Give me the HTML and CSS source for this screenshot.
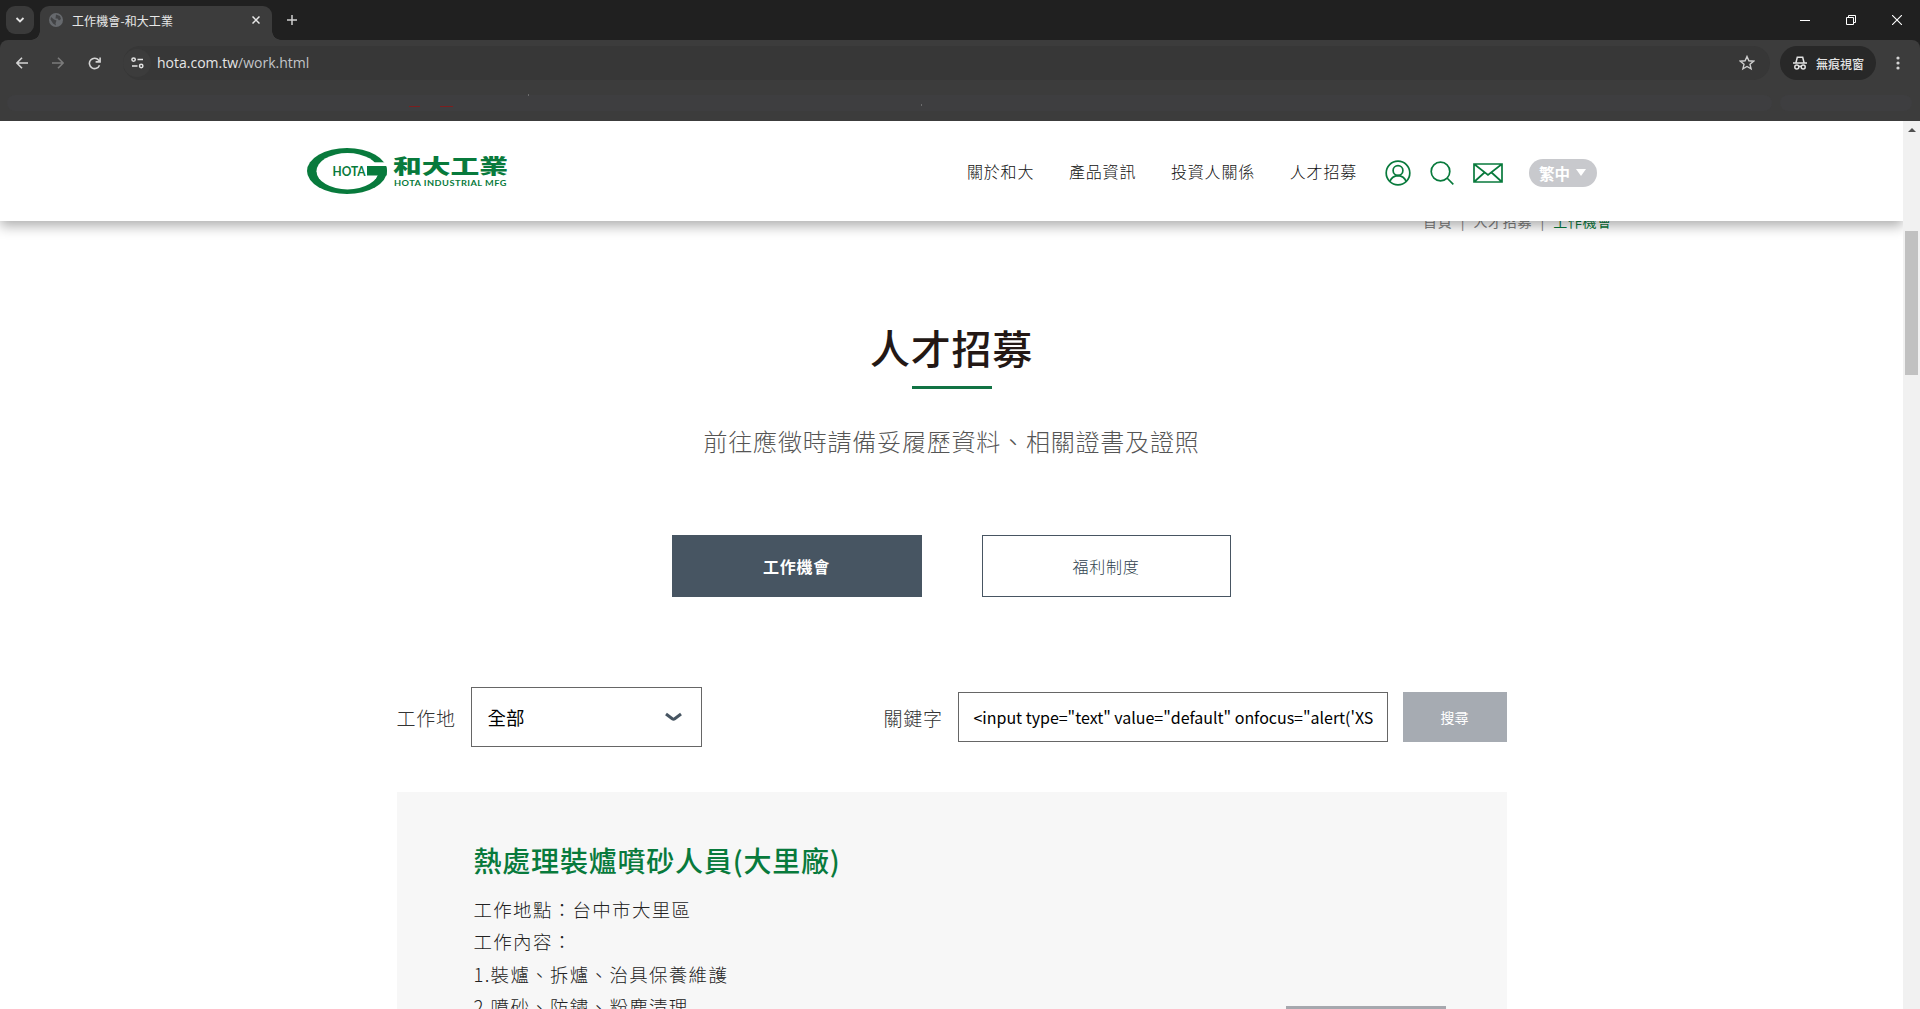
FILE: index.html
```html
<!DOCTYPE html>
<html lang="zh-Hant">
<head>
  <meta charset="UTF-8" />
  <meta name="viewport" content="width=device-width, initial-scale=1.0"/>
  <title>工作機會-和大工業</title>
  <link rel="stylesheet" href="styles.css">
</head>
<body>
  <div class="tab-strip">
    <div class="tab-search">
      <svg width="10" height="8" viewBox="0 0 10 8"><path d="M1.5 2l3.5 3.5L8.500 2" fill="none" stroke="#e3e3e3" stroke-width="1.8"/></svg>
    </div>
    <div class="tab">
      <svg width="14" height="14" viewBox="0 0 14 14"><circle cx="7" cy="7" r="7" fill="#66696d"/><path d="M2 4l3 2.500 2.500 1-1 3 .5 2-3-2-2.500-4zM7 1.500l4 1.500 1 3-2 1.500-1.500-2-2 0z" fill="#424345"/></svg>
      <span>工作機會-和大工業</span>
      <svg class="tab-close" width="8" height="8" viewBox="0 0 8 8"><path d="M.5.5l7 7M7.500.5l-7 7" stroke="#e8e8e8" stroke-width="1.5"/></svg>
    </div>
    <svg class="new-tab" width="10" height="10" viewBox="0 0 10 10"><path d="M5 0v10M0 5h10" stroke="#d0d0d0" stroke-width="1.5"/></svg>
    <div class="window-buttons">
      <svg width="10" height="10" viewBox="0 0 10 10"><path d="M0 5.500h10" stroke="#fff"/></svg>
      <svg width="10" height="10" viewBox="0 0 10 10"><path d="M.5 2.500h7v7h-7zM2.500 2.500v-2h7v7h-2" fill="none" stroke="#fff"/></svg>
      <svg width="10" height="10" viewBox="0 0 10 10"><path d="M0 0l10 10M10 0L0 10" stroke="#fff" stroke-width="1.1"/></svg>
    </div>
  </div>

  <div class="toolbar">
    <svg width="12" height="12" viewBox="0 0 12 12"><path d="M12 6H1M6 .8L.9 6 6 11.200" fill="none" stroke="#d4d4d4" stroke-width="1.6"/></svg>
    <svg width="12" height="12" viewBox="0 0 12 12"><path d="M0 6h11M6 .8L11.100 6 6 11.200" fill="none" stroke="#7b7b7b" stroke-width="1.6"/></svg>
    <svg width="13" height="13" viewBox="0 0 13 13"><path d="M11.500 8.200A5.200 5.200 0 1 1 10.700 3.200L12 4.600M12.100.4v4.500H7.600" fill="none" stroke="#d4d4d4" stroke-width="1.6"/></svg>
    <div class="address">
      <div class="site-info">
        <svg width="13" height="12" viewBox="0 0 13 12"><g fill="none" stroke="#e3e3e3" stroke-width="1.5"><circle cx="2.600" cy="2.600" r="1.700"/><path d="M6.500 2.600H12M1 9h5.500"/><circle cx="10.200" cy="9" r="1.700"/></g></svg>
      </div>
      <span class="url">hota.com.tw<span>/work.html</span></span>
      <svg class="star" width="16" height="16" viewBox="0 0 16 16"><path d="M8 1.500l1.900 4.300 4.700.4-3.600 3.100 1.100 4.600L8 11.500l-4.100 2.400L5 9.300 1.400 6.200l4.700-.4z" fill="none" stroke="#cfcfcf" stroke-width="1.400"/></svg>
    </div>
    <div class="incognito">
      <svg width="14" height="14" viewBox="0 0 14 14"><g fill="none" stroke="#e3e3e3" stroke-width="1.500"><path d="M0 7h14M3 6.500L4.300 1.200h5.400L11 6.500"/><circle cx="3.800" cy="11" r="2"/><circle cx="10.200" cy="11" r="2"/><path d="M5.800 10.500q1.200-.6 2.400 0"/></g></svg>
      <span>無痕視窗</span>
    </div>
    <svg class="menu" width="4" height="14" viewBox="0 0 4 14"><g fill="#d4d4d4"><circle cx="2" cy="2" r="1.600"/><circle cx="2" cy="7" r="1.600"/><circle cx="2" cy="12" r="1.600"/></g></svg>
  </div>
  <div class="bookmarks">
    <svg width="1920" height="38" viewBox="0 0 1920 38"><rect x="7" y="12" width="1765" height="16" rx="8" fill="#3e3e40"/><rect x="1780" y="12" width="132" height="16" rx="8" fill="#3e3e40"/><path d="M409 23.500h11M440 23.500h13" stroke="#7c1f1f"/><path d="M528 12h1M921 22h1" stroke="#999"/></svg>
  </div>

  <div class="viewport">
    <div class="page">
      <header>
        <svg class="logo" width="201" height="46" viewBox="0 0 201 46">
          <ellipse cx="40" cy="23" rx="40" ry="23" fill="#087a3c"/>
          <ellipse cx="40.500" cy="23.200" rx="31" ry="18.200" fill="#fff"/>
          <path d="M60 14.300h20.500V18H60z" fill="#fff"/>
          <path d="M60 18h19.100Q80.500 22 79.600 27.500H60z" fill="#087a3c"/>
          <text class="logo-mark" x="25.500" y="28" textLength="33" lengthAdjust="spacingAndGlyphs">HOTA</text>
          <text class="logo-name" x="86" y="25.700" textLength="115" lengthAdjust="spacingAndGlyphs">和大工業</text>
          <text class="logo-sub" x="87" y="37.700" textLength="113" lengthAdjust="spacingAndGlyphs">HOTA INDUSTRIAL MFG</text>
        </svg>
        <nav>
          <a>關於和大</a>
          <a>產品資訊</a>
          <a>投資人關係</a>
          <a>人才招募</a>
        </nav>
        <div class="tools">
          <svg width="26" height="26" viewBox="0 0 26 26"><g fill="none" stroke="#087a3c" stroke-width="1.700"><circle cx="13" cy="13" r="11.800"/><circle cx="13" cy="10.500" r="4.900"/><path d="M4.800 21.500Q7 16 13 15.600 19 16 21.200 21.500"/></g></svg>
          <svg width="24" height="24" viewBox="0 0 24 24"><g fill="none" stroke="#087a3c" stroke-width="1.700"><circle cx="10.500" cy="10.500" r="9.300"/><path d="M17 17l6.300 6.300"/></g></svg>
          <svg width="30" height="20" viewBox="0 0 30 20"><path d="M1 1h28v18H1zM1 1l14 11L29 1M1 19l10.500-9.500M29 19L18.500 9.500" fill="none" stroke="#087a3c" stroke-width="1.700"/></svg>
        </div>
        <div class="lang">繁中<i></i></div>
      </header>

      <main>
        <div class="breadcrumb"><a>首頁</a><i>|</i><a>人才招募</a><i>|</i><b>工作機會</b></div>
        <h1>人才招募</h1>
        <p class="lead">前往應徵時請備妥履歷資料、相關證書及證照</p>

        <div class="tabs">
          <a class="active">工作機會</a>
          <a>福利制度</a>
        </div>

        <div class="filter">
          <label>工作地</label>
          <div class="select">
            <span>全部</span>
            <svg width="17" height="10" viewBox="0 0 17 10"><path d="M1 2L7.300 6.800q1.200.9 2.400 0L16 2" fill="none" stroke="#475562" stroke-width="3"/></svg>
          </div>
          <label class="keyword">關鍵字</label>
          <div class="input">&lt;input type="text" value="default" onfocus="alert('XS</div>
          <div class="search">搜尋</div>
        </div>

        <div class="job">
          <div class="job-text">
            <h2>熱處理裝爐噴砂人員(大里廠)</h2>
            <p>工作地點：台中市大里區</p>
            <p>工作內容：</p>
            <p>1.裝爐、拆爐、治具保養維護</p>
            <p>2.噴砂、防鏽、粉塵清理</p>
          </div>
          <div class="job-button"></div>
        </div>
      </main>
    </div>
    <div class="scrollbar">
      <div class="arrow"></div>
      <div class="thumb"></div>
    </div>
  </div>
</body>
</html>
```
FILE: styles.css
```css
* {
  box-sizing: border-box;
}

body {
  margin: 0;
  height: 1009px;
  overflow: hidden;
  display: flex;
  flex-direction: column;
  font-family: "Noto Sans CJK TC", sans-serif;
  background: linear-gradient(#202020 60px, #fff 60px);
}

svg {
  display: block;
  flex: none;
}

h1, h2, p {
  margin: 0;
}

i, b {
  font-style: normal;
  font-weight: inherit;
}

/* ブラウザ上部 */
.tab-strip {
  height: 40px;
  flex: none;
  display: flex;
  align-items: center;
  padding: 0 18px 0 6px;
  background: #202020;
}

.tab-search {
  width: 28px;
  height: 28px;
  border-radius: 9px;
  background: #3a3a3a;
  display: flex;
  align-items: center;
  justify-content: center;
}

.tab {
  width: 232px;
  height: 34px;
  margin: 6px 0 0 6px;
  padding: 0 12px 6px 9px;
  border-radius: 9px 9px 0 0;
  background: #3c3c3c;
  display: flex;
  align-items: center;
  color: #e8e8e8;
  font-size: 12px;
  position: relative;
}

.tab::before,
.tab::after {
  content: "";
  position: absolute;
  bottom: 0;
  left: -9px;
  width: 9px;
  height: 9px;
  background: radial-gradient(circle at 0 0, #202020 8.500px, #3c3c3c 9px);
}

.tab::after {
  left: auto;
  right: -9px;
  background: radial-gradient(circle at 100% 0, #202020 8.500px, #3c3c3c 9px);
}

.tab span {
  margin-left: 9px;
  letter-spacing: 0.1px;
}

.tab-close {
  margin-left: auto;
}

.new-tab {
  margin-left: 15px;
}

.window-buttons {
  margin-left: auto;
  display: flex;
  gap: 36px;
}

.toolbar {
  height: 43px;
  flex: none;
  display: flex;
  align-items: center;
  padding: 3px 20px 0 16px;
  gap: 24px;
  background: #3c3c3c;
  border-radius: 8px 8px 0 0;
}

.address {
  flex: 1;
  height: 34px;
  margin-left: -2px;
  padding: 0 15px 0 0;
  border-radius: 17px;
  background: #373737;
  display: flex;
  align-items: center;
}

.site-info {
  width: 28px;
  height: 28px;
  border-radius: 14px;
  background: #3c3c3c;
  display: flex;
  align-items: center;
  justify-content: center;
}

.url {
  margin-left: 6px;
  padding-bottom: 1px;
  font-family: "Open Sans", sans-serif;
  font-size: 14px;
  color: #e6e6e6;
}

.url span {
  color: #c3c5c9;
}

.star {
  margin-left: auto;
}

.incognito {
  width: 96px;
  height: 34px;
  margin-left: -14px;
  padding-left: 13px;
  border-radius: 17px;
  background: #282828;
  display: flex;
  align-items: center;
  gap: 9px;
  color: #e3e3e3;
  font-size: 12px;
  font-weight: 500;
}

.menu {
  margin-left: -4px;
}

.bookmarks {
  height: 38px;
  flex: none;
  background: #3c3c3c;
}

.viewport {
  flex: 1;
  min-height: 0;
  display: flex;
}

.page {
  flex: 1;
  height: 888px;
  overflow: hidden;
}

/* ヘッダー */
header {
  height: 100px;
  padding: 0 306px 0 307px;
  display: flex;
  align-items: center;
  background: #fff;
  box-shadow: 0 5px 12px rgba(0, 0, 0, 0.32);
  position: relative;
  z-index: 1;
}

.logo text {
  fill: #087a3c;
}

.logo-mark {
  font: bold 14px Lato, sans-serif;
}

.logo-name {
  font-size: 20px;
  font-weight: 900;
}

.logo-sub {
  font: bold 8px Lato, sans-serif;
  letter-spacing: 0.4px;
}

nav {
  margin-left: auto;
  display: flex;
  gap: 34.800px;
  font-size: 16px;
  font-weight: 300;
  letter-spacing: 0.8px;
  color: #111;
}

.tools {
  margin: 3px 0 0 28px;
  display: flex;
  align-items: center;
  gap: 19px;
}

.lang {
  width: 68px;
  height: 28px;
  margin: 4px 0 0 26px;
  padding: 0 0 1px 10px;
  border-radius: 14px;
  background: #c8c9cd;
  display: flex;
  align-items: center;
  gap: 6px;
  color: #fff;
  font-size: 15.500px;
  line-height: 26px;
  font-weight: bold;
}

.lang i {
  border: 5px solid transparent;
  border-top: 7px solid #fff;
  border-bottom: 0;
}

/* 本文 */
main {
  display: flex;
  flex-direction: column;
  align-items: center;
}

.breadcrumb {
  align-self: flex-end;
  margin: -10px 291px 0 0;
  height: 20px;
  line-height: 20px;
  display: flex;
  font-size: 14px;
  letter-spacing: 0.7px;
  color: #808080;
}

.breadcrumb i {
  width: 21px;
  text-align: center;
}

.breadcrumb b {
  color: #087a3c;
}

h1 {
  margin-top: 84px;
  height: 74px;
  line-height: 64px;
  font-size: 40px;
  font-weight: 500;
  letter-spacing: 0.7px;
  color: #231815;
  display: flex;
  flex-direction: column;
  align-items: center;
}

h1::after {
  content: "";
  width: 80px;
  height: 3px;
  margin-top: 7px;
  background: #117344;
}

.lead {
  margin-top: 34px;
  line-height: 36px;
  font-size: 24px;
  font-weight: 300;
  letter-spacing: 0.8px;
  color: #555;
}

.tabs {
  margin: 76px 1px 0 0;
  display: flex;
  gap: 60px;
}

.tabs a {
  width: 249px;
  height: 62px;
  border: 1px solid #475562;
  display: flex;
  align-items: center;
  justify-content: center;
  font-size: 16px;
  font-weight: 300;
  letter-spacing: 0.7px;
  color: #2f3f4d;
}

.tabs .active {
  width: 250px;
  background: #475562;
  color: #fff;
  font-weight: bold;
}

.filter {
  width: 1110px;
  height: 60px;
  margin-top: 90px;
  display: flex;
  align-items: center;
}

.filter label {
  width: 74px;
  font-weight: 300;
  font-size: 19px;
  letter-spacing: 0.7px;
  color: #333;
}

.select {
  width: 231px;
  height: 60px;
  padding: 0 19px 0 16px;
  border: 1px solid #666;
  display: flex;
  align-items: center;
  justify-content: space-between;
  font-size: 18.500px;
  color: #000;
}

.filter .keyword {
  margin-left: auto;
}

.input {
  width: 430px;
  height: 50px;
  padding: 0 14px 0 15px;
  border: 1px solid #666;
  font-size: 16px;
  line-height: 49px;
  letter-spacing: -0.020px;
  white-space: nowrap;
  color: #000;
}

.search {
  width: 104px;
  height: 50px;
  margin-left: 15px;
  background: #a6abb2;
  color: #fff;
  font-size: 14px;
  line-height: 50px;
  text-align: center;
}

.job {
  width: 1110px;
  height: 300px;
  margin-top: 45px;
  padding: 47px 61px 0 77px;
  background: #f7f7f7;
  display: flex;
  justify-content: space-between;
}

.job h2 {
  line-height: 42px;
  margin-bottom: 12px;
  font-size: 28px;
  font-weight: 500;
  letter-spacing: 0.8px;
  color: #087a3c;
}

.job p {
  line-height: 32.400px;
  font-size: 18.500px;
  font-weight: 300;
  letter-spacing: 1.300px;
  color: #222;
}

.job-button {
  width: 160px;
  height: 50px;
  margin-top: 167px;
  background: #a6a8ae;
}

.scrollbar {
  width: 17px;
  background: #f1f1f1;
}

.arrow {
  width: 0;
  margin: 7px auto 0;
  border: 4px solid transparent;
  border-top: 0;
  border-bottom-color: #505050;
}

.thumb {
  width: 13px;
  height: 144px;
  margin: 99px auto 0;
  background: #c1c1c1;
}
```
